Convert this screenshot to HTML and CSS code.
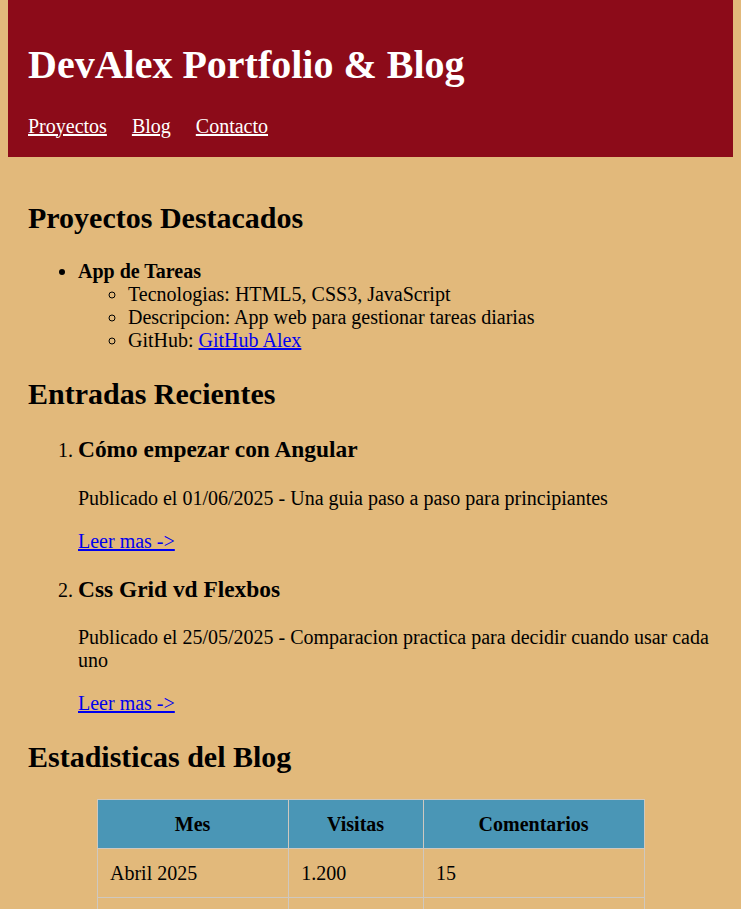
FILE: index.html
```html
<!DOCTYPE html>
<html lang="es">
<head>
<meta charset="utf-8">
<title>DevAlex Portfolio &amp; Blog</title>
<link rel="stylesheet" href="styles.css">
</head>
<body>
<header class="site-header">
  <h1 class="site-title">DevAlex Portfolio &amp; Blog</h1>
  <nav class="site-nav">
    <a href="#proyectos">Proyectos</a>
    <a href="#blog">Blog</a>
    <a href="#contacto">Contacto</a>
  </nav>
</header>
<main class="content">
  <section id="proyectos">
    <h2>Proyectos Destacados</h2>
    <ul class="list">
      <li><strong>App de Tareas</strong>
        <ul class="list sublist">
          <li>Tecnologias: HTML5, CSS3, JavaScript</li>
          <li>Descripcion: App web para gestionar tareas diarias</li>
          <li>GitHub: <a href="#">GitHub Alex</a></li>
        </ul>
      </li>
    </ul>
  </section>
  <section id="blog">
    <h2>Entradas Recientes</h2>
    <ol class="list">
      <li>
        <h3>Cómo empezar con Angular</h3>
        <p>Publicado el 01/06/2025 - Una guia paso a paso para principiantes</p>
        <p><a href="#">Leer mas -&gt;</a></p>
      </li>
      <li>
        <h3>Css Grid vd Flexbos</h3>
        <p>Publicado el 25/05/2025 - Comparacion practica para decidir cuando usar cada uno</p>
        <p><a href="#">Leer mas -&gt;</a></p>
      </li>
    </ol>
  </section>
  <section id="estadisticas">
    <h2>Estadisticas del Blog</h2>
    <table class="stats">
      <thead>
        <tr><th>Mes</th><th>Visitas</th><th>Comentarios</th></tr>
      </thead>
      <tbody>
        <tr><td>Abril 2025</td><td>1.200</td><td>15</td></tr>
        <tr><td>Mayo 2025</td><td>1.850</td><td>27</td></tr>
        <tr><td>Junio 2025</td><td>2.300</td><td>34</td></tr>
      </tbody>
    </table>
  </section>
</main>
</body>
</html>
```
FILE: styles.css
```css
html {
  background: #e2b97b;
}
body {
  margin: 0 8px 8px;
  font-family: "Liberation Serif", "Times New Roman", serif;
  font-size: 20px;
  color: #000;
  background: #e2b97b;
}
.site-header {
  background: #8c0b19;
  padding: 14px 20px 19px;
}
.site-title {
  color: #fff;
  font-size: 40px;
  margin: 0.67em 0;
}
.site-nav {
  display: flex;
  gap: 25px;
}
.site-nav a {
  color: #fff;
}
.content {
  padding: 20px;
}
h2 {
  font-size: 30px;
  margin: 0.83em 0;
}
h3 {
  font-size: 23.4px;
  margin: 1em 0;
}
p {
  margin: 20px 0;
}
.list {
  margin: 20px 0;
  padding-left: 50px;
}
.sublist {
  margin: 0;
  list-style-type: circle;
}
a {
  color: #0000ee;
}
.stats {
  width: 80%;
  margin: 20px auto;
  border-collapse: collapse;
}
.stats th,
.stats td {
  border: 1px solid #cfc8bf;
  padding: 12.5px;
  text-align: left;
}
.stats th {
  background: #4a96b6;
  text-align: center;
}
```
